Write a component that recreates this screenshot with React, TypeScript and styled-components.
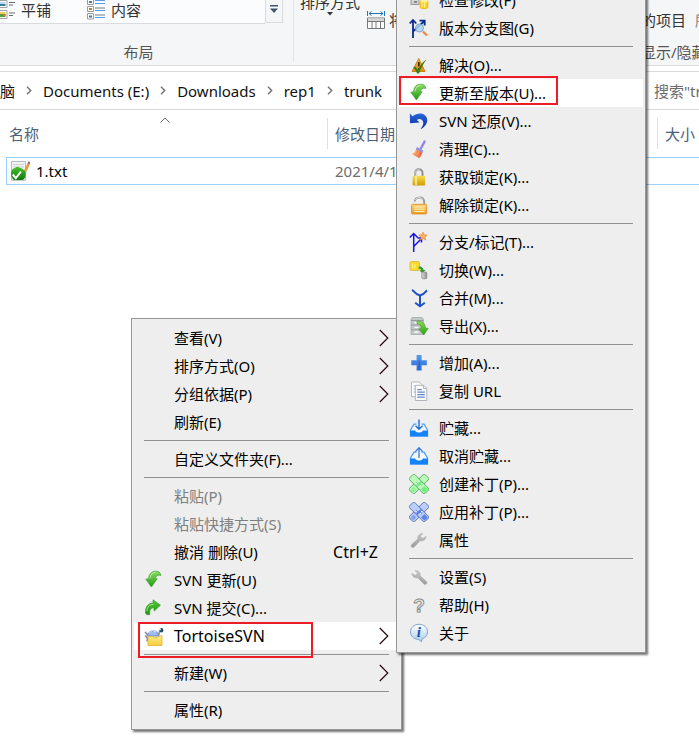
import React from "react";
import styled, { createGlobalStyle } from "styled-components";

const GlobalStyle = createGlobalStyle`
  * { box-sizing: border-box; }
  html, body { margin: 0; background: #fff; }
  body, button, input, table {
    font-family: "Noto Sans", "Noto Sans CJK SC", sans-serif;
    font-size: 15px;
    line-height: 20px;
    color: #000;
  }
  button { border: 0; background: none; padding: 0; text-align: left; white-space: nowrap; }
`;

/* ---------- Window ---------- */

const Window = styled.div`
  position: relative;
  min-height: 100vh;
  overflow: hidden;
  background: #fff;
`;

const Ribbon = styled.header`
  display: flex;
  height: 66px;
  background: #f5f6f7;
  border-bottom: 1px solid #dadbdc;
  overflow: hidden;
  color: #333;
`;

const LayoutGroup = styled.section`
  display: flex;
  flex-direction: column;
  width: 294px;
  padding-right: 11px;
  flex: none;
`;

const GroupDivider = styled.div`
  flex: none;
  width: 1px;
  height: 62px;
  margin-left: -1px;
  background: #e2e3e4;
`;

const Gallery = styled.div`
  display: flex;
  height: 24px;
`;

const GalleryItems = styled.div`
  display: flex;
  flex: 1;
  background: #fbfcfd;
  border-bottom: 1px solid #dadbdc;
`;

const GalleryItem = styled.button<{ $width: number; $gap: number }>`
  display: flex;
  align-items: center;
  gap: ${(p) => p.$gap}px;
  width: ${(p) => p.$width}px;
  height: 20px;
  color: #333;
`;

const GalleryMore = styled.button`
  width: 18px;
  height: 23px;
  display: flex;
  justify-content: center;
  border: 1px solid #dadbdc;
  border-top: 0;
`;

const GroupLabel = styled.div`
  color: #555;
  text-align: center;
  margin-top: 18px;
  padding-right: 6px;
  white-space: nowrap;
`;

const ViewGroup = styled.section`
  flex: 1;
  display: flex;
  padding-left: 6px;
  gap: 7px;
  min-width: 0;
  overflow: hidden;
`;

const SortButton = styled.button`
  display: flex;
  flex-direction: column;
  align-items: center;
  margin-top: -8px;
  height: 30px;
  color: #333;
  flex: none;
`;

const FitButton = styled.button`
  display: flex;
  align-items: center;
  gap: 4px;
  height: 22px;
  margin-top: 9px;
  color: #333;
`;

const ShowGroup = styled.section`
  flex: none;
  width: 58px;
  padding-top: 10px;
  overflow: hidden;
`;

const ShowRow = styled.div`
  display: flex;
  gap: 9px;
  height: 20px;
  white-space: nowrap;
`;

const ShowButton = styled.button<{ $disabled?: boolean }>`
  flex: none;
  color: ${(p) => (p.$disabled ? "#888" : "#333")};
`;

const ShowLabel = styled.div`
  margin-top: 12px;
  color: #555;
  white-space: nowrap;
`;

const AddressBar = styled.nav`
  display: flex;
  height: 39px;
  margin-top: 5px;
  border: 1px solid #d9d9d9;
  border-width: 1px 0;
`;

const Crumbs = styled.div`
  flex: 1;
  display: flex;
  align-items: center;
  min-width: 0;
  overflow: hidden;
`;

const Crumb = styled.button`
  color: #111;
  flex: none;
`;

const CrumbArrow = styled.span`
  display: flex;
  justify-content: center;
  flex: none;
  width: 28px;
`;

const Search = styled.input`
  width: 45px;
  border: 0;
  padding: 0;
  outline: 0;
  background: transparent;
  &::placeholder { color: #6d6d6d; opacity: 1; }
`;

const FileTable = styled.table`
  width: calc(100% - 6px);
  margin-left: 6px;
  table-layout: fixed;
  border-collapse: separate;
  border-spacing: 0;
`;

const Th = styled.th<{ $width?: number }>`
  width: ${(p) => (p.$width ? `${p.$width}px` : "auto")};
  height: 47px;
  padding: 0;
  font-weight: 400;
  text-align: left;
  color: #4c607a;
  position: relative;
`;

const ThLabel = styled.div<{ $first?: boolean }>`
  height: 31px;
  padding: 6px 0 0 ${(p) => (p.$first ? 3 : 7)}px;
  border-left: ${(p) => (p.$first ? "0" : "1px solid #e0e0e0")};
  white-space: nowrap;
  overflow: hidden;
`;

const SortMark = styled.svg`
  position: absolute;
  top: 7px;
  left: 50%;
  margin-left: -7px;
`;

const Td = styled.td<{ $muted?: boolean }>`
  height: 28px;
  padding: 0 0 0 ${(p) => (p.$muted ? 8 : 3)}px;
  border: 1px solid #99d1ff;
  border-width: 1px 0;
  color: ${(p) => (p.$muted ? "#6d6d6d" : "#000")};
  white-space: nowrap;
  overflow: hidden;
  &:first-child { border-left-width: 1px; }
`;

const FileName = styled.div`
  display: flex;
  align-items: center;
  gap: 6px;
`;

/* ---------- Menus ---------- */

const Menu = styled.div<{ $left: number; $top: number; $width: number }>`
  position: absolute;
  left: ${(p) => p.$left}px;
  top: ${(p) => p.$top}px;
  width: ${(p) => p.$width}px;
  padding: 5px 2px;
  background: #eee;
  border: 1px solid #979797;
  box-shadow: 2px 2px 2px rgba(0, 0, 0, 0.55);
`;

const Item = styled.button<{ $active?: boolean; $disabled?: boolean }>`
  position: relative;
  display: flex;
  align-items: center;
  width: 100%;
  height: 28px;
  padding: 0 10px;
  color: ${(p) => (p.$disabled ? "#808080" : "#000")};
  background: ${(p) => (p.$active ? "#fff" : "transparent")};
`;

const IconSlot = styled.span`
  flex: none;
  width: 30px;
  height: 20px;
`;

const Label = styled.span<{ $latin?: boolean }>`
  flex: 1;
  font-size: ${(p) => (p.$latin ? 16 : 15)}px;
`;

const Shortcut = styled.span`
  padding-right: 11px;
  font-size: 16px;
`;

const Separator = styled.hr`
  height: 1px;
  margin: 4px 10px;
  border: 0;
  background: #919191;
`;

const Marker = styled.span<{ $x: number; $y: number; $w: number; $h: number }>`
  position: absolute;
  z-index: 1;
  left: ${(p) => p.$x}px;
  top: ${(p) => p.$y}px;
  width: ${(p) => p.$w}px;
  height: ${(p) => p.$h}px;
  border: 2px solid #ed1c24;
  pointer-events: none;
`;

/* ---------- Icons ---------- */

const Svg = ({ children }: { children: React.ReactNode }) => (
  <svg width="20" height="20" viewBox="0 0 20 20" fill="none" aria-hidden="true" display="block">
    {children}
  </svg>
);

const Grad = ({ id, from, to, across }: { id: string; from: string; to: string; across?: boolean }) => (
  <linearGradient id={id} x1="0" y1="0" x2={across ? "1" : "0"} y2={across ? "0" : "1"}>
    <stop offset="0" stopColor={from} />
    <stop offset="1" stopColor={to} />
  </linearGradient>
);

const Update = ({ id }: { id: string }) => (
  <Svg>
    <Grad id={id} from="#8fdc6a" to="#1e9a10" />
    <path d="M4.600 8.800C4.800 4 7.600 1.200 11.600 1.200c3 0 5 1.400 5.200 4.400-1.800-1-4.600-.6-5.400 3l1.800.2-5.800 8.200L1.800 9.200z" fill={`url(#${id})`} stroke="#3da32c" strokeWidth=".7" />
    <path d="M6 8.500C6.300 5 8.300 2.500 11.600 2.300" stroke="#c2f2a8" strokeWidth=".9" />
  </Svg>
);

const Commit = () => (
  <Svg>
    <Grad id="gCommit" from="#55c93c" to="#1e9a10" />
    <path d="M1.600 15.500C1 9.200 4 5.200 9.200 5.100L9 1.800l7.400 5.400-6.200 5.800-.2-3.200c-3.200-.2-4.600 2-4.200 6.600-1.500.6-3 .4-4.200-.9z" fill="url(#gCommit)" stroke="#3a8f2c" strokeWidth=".7" />
    <path d="M3 13C3 9 5.500 6.500 9.500 6.400" stroke="#a8ec8c" strokeWidth=".9" />
  </Svg>
);

const Tortoise = () => (
  <Svg>
    <Grad id="gFolder" from="#ffe98a" to="#f5d040" />
    <path d="M1 6l3 3M1.500 9.500l2 3-.5 3" stroke="#7d8791" strokeWidth="1.500" />
    <path d="M3.500 10a5.700 6.300 0 0 1 11.200 0z" fill="#9dbcf0" stroke="#6a88c8" />
    <path d="M5.500 6.500l3-2 3.500 1.500" stroke="#d5e3fb" />
    <path d="M14.500 9.500l1.300-5" stroke="#8796a3" strokeWidth="1.800" />
    <ellipse cx="17.400" cy="4.300" rx="1.900" ry="2.300" fill="#24465c" />
    <circle cx="16" cy="3.400" r="1" fill="#d4eafa" />
    <path d="M4 10.500h4.500l1.500 1.500L18 9.500v10H4z" fill="url(#gFolder)" stroke="#e0b030" strokeWidth=".8" />
  </Svg>
);

const CheckMods = () => (
  <Svg>
    <rect x="2" y="9" width="8" height="5.500" fill="#d4d4d4" stroke="#9a9a9a" />
    <rect x="5" y="11" width="3" height="2" fill="#888" />
    <path d="M11.200 11v6.200c0 2 7.600 2 7.600 0V11z" fill="#ffd21a" stroke="#e3ae10" strokeWidth=".8" />
    <ellipse cx="15" cy="11.200" rx="3.800" ry="1.400" fill="#fff09a" />
    <path d="M13 13v4M15.500 13v4.500" stroke="#fff09a" />
  </Svg>
);

const Graph = () => (
  <Svg>
    <path d="M4 20V2M.7 5.500L4 2l3.300 3.500M4.500 13L15 3.500M10.500 2.600h5.200v5" stroke="#0c2a8c" strokeWidth="1.800" />
    <circle cx="10.500" cy="10" r="4" fill="#a9d3ef" fillOpacity=".85" stroke="#7fa8c8" />
    <path d="M14 13.500l4 4" stroke="#f08a48" strokeWidth="2.400" />
  </Svg>
);

const Resolve = () => (
  <Svg>
    <Grad id="gRes" from="#fbc04a" to="#e88b10" />
    <path d="M9.800 3.500L16 16.500H3z" fill="url(#gRes)" stroke="#c8801c" strokeLinejoin="round" />
    <path d="M9.800 7v4.500M9.800 13v1.500" stroke="#40300c" strokeWidth="1.800" />
    <path d="M4.500 12.500l1.800-1 2.600 3.200C11 10.500 13.500 7 17.500 4.500c-3 4-5.500 8.500-7.500 14H8.300z" fill="#3e7d16" />
  </Svg>
);

const Revert = () => (
  <Svg>
    <Grad id="gRev" from="#2868dc" to="#072a9c" />
    <path d="M.8 2.500l2.800 2.700C8 1.800 13 1.500 16.200 4.400c4 4 2 10.600-4.800 13.800 3-3.600 3.800-7 1.800-9-1.500-1.600-3.600-1.500-5.400-.3l2.800 2.700L1 12.200z" fill="url(#gRev)" />
  </Svg>
);

const Broom = () => (
  <Svg>
    <Grad id="gBroom" from="#f8b070" to="#ef5a3c" across />
    <path d="M15.600 2.500l-3.800 7" stroke="#8f86e8" strokeWidth="2.400" strokeLinecap="round" />
    <path d="M8 8l6.200 3.500-.8 2.600-6.600-3.800z" fill="#8a93e6" />
    <path d="M7.200 10.200l6.200 3.500c-.8 2-1.600 4-3.200 5.500L3 15c2-1 3.300-2.500 4.200-4.800z" fill="url(#gBroom)" />
    <path d="M7.500 11.500l-2 3M9.500 12.500l-1 3" stroke="#ffd090" strokeWidth=".7" />
  </Svg>
);

const Lock = () => (
  <Svg>
    <Grad id="gLock" from="#f6de50" to="#d19a08" />
    <path d="M6.200 10V6c0-5 7.300-5 7.300 0v4" stroke="#8f8f8f" strokeWidth="2" />
    <path d="M6 9V6c.2-3.400 3.300-4.200 5-3" stroke="#dcdcdc" strokeWidth=".8" />
    <rect x="3.600" y="8.800" width="12.600" height="9.800" rx="1" fill="url(#gLock)" />
    <path d="M7 9v9" stroke="#fbee98" strokeWidth="1.600" />
  </Svg>
);

const Unlock = () => (
  <Svg>
    <Grad id="gUnlock" from="#ffd878" to="#ee9a24" />
    <path d="M5.600 6.500c.6-5 8.800-5.600 9.600 0V10" stroke="#969696" strokeWidth="1.800" />
    <path d="M6 5c2-3 6-3.300 8-.5" stroke="#e6e6e6" strokeWidth=".8" />
    <rect x="2.500" y="9.300" width="15.200" height="9.700" rx="1" fill="url(#gUnlock)" stroke="#d98a1c" strokeWidth=".8" />
    <path d="M5 12h10.500M5 14.200h10.500M5 16.500h10.500" stroke="#fff0c0" />
  </Svg>
);

const Branch = () => (
  <Svg>
    <path d="M4.700 20V2M.8 5.500l3.900-4 3.900 4M4.700 14.500L12 7M8.500 6h4v4.500" stroke="#1414ec" strokeWidth="1.500" />
    <path d="M14 .2l1.200 2.700 3 .2-2.300 2 .8 3-2.700-1.700-2.600 1.700.7-3L9.800 3.100l3-.2z" fill="#ffb45c" stroke="#e8843c" strokeWidth=".7" />
  </Svg>
);

const Switch = () => (
  <Svg>
    <Grad id="gSwGray" from="#dedede" to="#8d8d8d" across />
    <rect x="1" y="1.500" width="9.400" height="9" rx="1.500" fill="#ffdc24" stroke="#d9b844" strokeWidth=".9" />
    <path d="M3.500 3.500v4.500M5.800 4.500v5" stroke="#fff6a0" strokeWidth=".8" />
    <path d="M9.500 6.500c3-.3 4.800 1 5 3.600l1.800-.1-2.800 3.500-3.200-3.200 1.800-.1c-.3-1.200-1.200-1.700-2.600-1.700z" fill="#2f9a2c" />
    <rect x="12.800" y="12" width="5" height="6.800" rx="1.400" fill="url(#gSwGray)" stroke="#8c8c8c" strokeWidth=".8" />
  </Svg>
);

const Merge = () => (
  <Svg>
    <path d="M3 1.800c2 1 2.500 4.500 8 5.700 5-1.200 5.500-4.200 7-5.200M11 7.500V18M6.200 14.700L11 18.300l4.800-3.600" stroke="#1f52c4" strokeWidth="2" />
  </Svg>
);

const Export = () => (
  <Svg>
    <Grad id="gExp" from="#8ade50" to="#2a9c14" />
    <path d="M3 1.500h10l1.500 2v15H2V3.500z" fill="#c3c8c8" stroke="#a2a8a8" strokeWidth=".8" />
    <path d="M2 4.500h12M2 9h12M2 13.800h12" stroke="#959c9c" />
    <path d="M5.500 6.800h4M5.500 11.400h4M5.500 16h4" stroke="#fff" strokeWidth="1.400" />
    <path d="M8 5.200c5-.4 8.200 1.800 8.500 7l2.700.1-4.300 6.600-5.200-6 2.500-.2C12 9 10.800 8 8 7.800z" fill="url(#gExp)" stroke="#3a9c24" strokeWidth=".6" />
  </Svg>
);

const Plus = () => (
  <Svg>
    <Grad id="gPlus" from="#5a9cf0" to="#2a68d4" />
    <path d="M7.600 2h5v5.300h5.200v5h-5.200v5.300h-5v-5.300H2.300v-5h5.300z" fill="url(#gPlus)" />
    <path d="M10.200 7.500v7" stroke="#2454bc" strokeWidth=".9" />
  </Svg>
);

const Copy = () => (
  <Svg>
    <path d="M2.500 1h7.700l3 3v11.700H2.500z" fill="#fff" stroke="#b4b8bc" />
    <path d="M4.500 5h4M4.500 8h3M4.500 11h3" stroke="#9db4d8" />
    <path d="M6.300 4.300h8.200l3.300 3.200v12H6.300z" fill="#fbfcfe" stroke="#b0b4b8" />
    <path d="M14.500 4.300v3.200h3.300" stroke="#b0b4b8" />
    <path d="M8.300 8.700h4.500M8.300 11.200h7.500M8.300 13.700h7.500M8.300 16.200h7.500" stroke="#6287c4" strokeWidth="1.200" />
  </Svg>
);

const Tray = ({ up }: { up?: boolean }) => (
  <Svg>
    <path d="M7.500 6.200H5L1.500 12v6h17v-6L15 6.200h-2.500" fill="#f4f9ff" stroke="#4a9cf4" strokeWidth="1.200" />
    <path d="M1 12.500h5.200c.6 2.800 7 2.800 7.600 0H19v6H1z" fill="#1482f8" />
    {up ? (
      <path d="M10 12V2M6.300 5.600L10 1.800l3.700 3.800" stroke="#3c7cd8" strokeWidth="1.300" />
    ) : (
      <path d="M10 1.500v9.500M6.500 7.800L10 11.300l3.500-3.500" stroke="#1c6ad8" strokeWidth="1.400" />
    )}
  </Svg>
);

const Patch = ({ light, dark, edge }: { light: string; dark: string; edge: string }) => (
  <Svg>
    <rect x="-1" y="6.300" width="22" height="7.400" rx="1.200" transform="rotate(-45 10 10)" fill={light} stroke={edge} strokeWidth=".8" />
    <rect x="-1" y="6.300" width="22" height="7.400" rx="1.200" transform="rotate(45 10 10)" fill={light} stroke={edge} strokeWidth=".8" />
    <path d="M12 15.500l3.500-3.500 3.200 3.600-3.200 3.200z" fill={dark} />
    <path d="M4.500 12.500l3 3-3 3-3-3z" fill={dark} fillOpacity=".6" />
    <path d="M5.500 10L10 5.500l4.500 4.500-4.500 4.500z" fill={dark} />
    <path d="M10 6.200v1.500M10 12.300v1.500M6.300 9.800h1.500M12.200 9.800h1.500M8.200 8h1.400M10.600 11.800h1.400" stroke="#fff" strokeWidth="1.400" />
  </Svg>
);

const Wrench = ({ flip }: { flip?: boolean }) => (
  <Svg>
    <Grad id={flip ? "gWr2" : "gWr1"} from="#c9c9c9" to="#9a9a9a" />
    <path
      transform={flip ? "translate(20 0) scale(-1 1)" : undefined}
      d="M17.200 6.500c-.3 3.200-3.200 5-6 4.200l-6 6.300c-1.800 1.500-4.200-.6-2.600-2.500l6.300-5.700C8.200 6 10.500 3.300 13.800 3.500l-2.400 2.700 2.200 2.200z"
      fill={`url(#${flip ? "gWr2" : "gWr1"})`}
      stroke="#adadad"
      strokeWidth=".6"
    />
  </Svg>
);

const Help = () => (
  <Svg>
    <text x="10" y="16.500" textAnchor="middle" fontFamily="Liberation Sans" fontWeight="700" fontSize="19" fill="#efefef" stroke="#8c8c8c" strokeWidth="1">?</text>
  </Svg>
);

const About = () => (
  <Svg>
    <Grad id="gInfo" from="#ffffff" to="#a9cdf0" />
    <path d="M10 1.300c5 0 8.500 3.200 8.500 7.500 0 3.600-2.300 6-5.500 7l-.5 3-3-2.400C4.800 16.200 1.500 13 1.500 8.800c0-4.300 3.500-7.500 8.500-7.500z" fill="url(#gInfo)" stroke="#7da6cc" />
    <text x="9.800" y="14" textAnchor="middle" fontFamily="Liberation Serif" fontStyle="italic" fontWeight="700" fontSize="15" fill="#1450b4">i</text>
  </Svg>
);

const Chevron = () => (
  <svg width="10" height="18" viewBox="0 0 10 18" fill="none" aria-hidden="true">
    <path d="M.8 1l8 8-8 8" stroke="#26080c" strokeWidth="1.200" />
  </svg>
);

const CrumbChevron = () => (
  <svg width="6" height="9" viewBox="0 0 6 9" fill="none" aria-hidden="true">
    <path d="M1 .8l3.700 3.700L1 8.200" stroke="#777" strokeWidth="1.500" />
  </svg>
);

const TilesIcon = () => (
  <svg width="16" height="20" viewBox="0 0 16 20" fill="none" aria-hidden="true">
    <path d="M-3 .5H7v7H-3zM-3 10.500H7v8H-3z" fill="#fff" stroke="#a4a4a4" />
    <path d="M0 2h5.500v2H0z" fill="#b8dcf8" />
    <path d="M0 4h5.500v2H0z" fill="#3a7a9c" />
    <path d="M0 12h5.500v2H0z" fill="#f0c860" />
    <path d="M0 14h5.500v3H0z" fill="#58a03c" />
    <path d="M3 14h2.500v2H3z" fill="#e07040" />
    <path d="M9 2.500h6M9 5h4M9 13h6M9 15.500h4" stroke="#6c6c6c" />
  </svg>
);

const ContentIcon = () => (
  <svg width="18" height="20" viewBox="0 0 18 20" fill="none" aria-hidden="true">
    <path d="M.5-.5h6v5h-6zM.5 6.500h6v5h-6zM.5 13.500h6v5.500h-6z" fill="#fff" stroke="#9c9c9c" />
    <path d="M2 1h3v2H2zM2 15.500h3v2H2z" fill="#3c78b4" />
    <path d="M2 8h3v2H2z" fill="#a48c3c" />
    <path d="M8 .5h10M8 3.500h10M8 10.500h10M8 17.500h10" stroke="#5a9cf0" />
    <path d="M8 8h10M8 15h10" stroke="#6c7c8c" />
  </svg>
);

const MoreIcon = () => (
  <svg width="10" height="20" viewBox="0 0 10 20" aria-hidden="true">
    <path d="M1 5h8v1.500H1zM1 8.500h8L5 13z" fill="#3f5574" />
  </svg>
);

const DownIcon = () => (
  <svg width="6" height="4" viewBox="0 0 6 4" aria-hidden="true">
    <path d="M0 0h6L3 3.500z" fill="#333" />
  </svg>
);

const FitIcon = () => (
  <svg width="18" height="18" viewBox="0 0 18 18" fill="none" aria-hidden="true">
    <path d="M.5 0v5M17.500 0v5M2 2.500h14M4.500.5l-2.500 2 2.500 2M13.500.5l2.500 2-2.500 2" stroke="#1f74b8" />
    <path d="M.5 7h17v10.500H.5z" fill="#fff" stroke="#777" />
    <path d="M1 7.500h16v3H1z" fill="#d6d6d6" />
    <path d="M.5 10.500h17M5 10.500v7M9 10.500v7M13.500 10.500v7" stroke="#777" />
  </svg>
);

const FileIcon = () => (
  <svg width="20" height="20" viewBox="0 0 20 20" fill="none" aria-hidden="true">
    <Grad id="gFile" from="#46c42c" to="#0f7a0c" />
    <path d="M1.500.5h14v18.800h-14z" fill="#f0f2f4" stroke="#b8bcc0" />
    <path d="M3 3.500h11M3 6h11" stroke="#d0d4d8" />
    <path d="M13 13l4.700-10.500 1.700.8L14.500 14l-2 1.500z" fill="#f0a030" stroke="#c87818" strokeWidth=".5" />
    <path d="M17.700 2.300l.8-1.800 1.700.8-.8 1.900z" fill="#8c4868" />
    <path d="M1 12c0-3 2-4.500 4-5C6.500 5.200 8.500 5.400 9.500 6.800c3.500.8 6.200 3 6.200 6.200 0 3.500-1.700 6-3.700 6H4c-2-1.500-3-4-3-7z" fill="url(#gFile)" />
    <path d="M2.800 13.500l3 3.700L11 10.500" stroke="#fff" strokeWidth="2" />
  </svg>
);

/* ---------- Menu data ---------- */

type Entry =
  | null
  | {
      label: string;
      latin?: boolean;
      icon?: React.ReactNode;
      shortcut?: string;
      more?: boolean;
      disabled?: boolean;
      active?: boolean;
      marker?: [number, number, number, number];
    };

const mainEntries: Entry[] = [
  { label: "查看(V)", more: true },
  { label: "排序方式(O)", more: true },
  { label: "分组依据(P)", more: true },
  { label: "刷新(E)" },
  null,
  { label: "自定义文件夹(F)..." },
  null,
  { label: "粘贴(P)", disabled: true },
  { label: "粘贴快捷方式(S)", disabled: true },
  { label: "撤消 删除(U)", shortcut: "Ctrl+Z" },
  { label: "SVN 更新(U)", icon: <Update id="gUpd1" /> },
  { label: "SVN 提交(C)...", icon: <Commit /> },
  { label: "TortoiseSVN", latin: true, icon: <Tortoise />, more: true, active: true, marker: [4, 0, 175, 36] },
  null,
  { label: "新建(W)", more: true },
  null,
  { label: "属性(R)" },
];

const svnEntries: Entry[] = [
  { label: "检查修改(F)", icon: <CheckMods /> },
  { label: "版本分支图(G)", icon: <Graph /> },
  null,
  { label: "解决(O)...", icon: <Resolve /> },
  { label: "更新至版本(U)...", icon: <Update id="gUpd2" />, active: true, marker: [0, -3, 159, 29] },
  { label: "SVN 还原(V)...", icon: <Revert /> },
  { label: "清理(C)...", icon: <Broom /> },
  { label: "获取锁定(K)...", icon: <Lock /> },
  { label: "解除锁定(K)...", icon: <Unlock /> },
  null,
  { label: "分支/标记(T)...", icon: <Branch /> },
  { label: "切换(W)...", icon: <Switch /> },
  { label: "合并(M)...", icon: <Merge /> },
  { label: "导出(X)...", icon: <Export /> },
  null,
  { label: "增加(A)...", icon: <Plus /> },
  { label: "复制 URL", icon: <Copy /> },
  null,
  { label: "贮藏...", icon: <Tray /> },
  { label: "取消贮藏...", icon: <Tray up /> },
  { label: "创建补丁(P)...", icon: <Patch light="#b8fcb8" dark="#6cf07c" edge="#4c9c54" /> },
  { label: "应用补丁(P)...", icon: <Patch light="#bccffc" dark="#5c84f0" edge="#4c60a0" /> },
  { label: "属性", icon: <Wrench /> },
  null,
  { label: "设置(S)", icon: <Wrench flip /> },
  { label: "帮助(H)", icon: <Help /> },
  { label: "关于", icon: <About /> },
];

const MenuEntries = ({ entries }: { entries: Entry[] }) => (
  <>
    {entries.map((e, i) =>
      e === null ? (
        <Separator key={i} />
      ) : (
        <Item key={i} role="menuitem" $active={e.active} $disabled={e.disabled} disabled={e.disabled}>
          <IconSlot>{e.icon}</IconSlot>
          <Label $latin={e.latin}>{e.label}</Label>
          {e.shortcut && <Shortcut>{e.shortcut}</Shortcut>}
          {e.more && <Chevron />}
          {e.marker && <Marker $x={e.marker[0]} $y={e.marker[1]} $w={e.marker[2]} $h={e.marker[3]} />}
        </Item>
      )
    )}
  </>
);

const crumbs = ["脑", "Documents (E:)", "Downloads", "rep1", "trunk"];

export default function App() {
  return (
    <Window>
      <GlobalStyle />
      <Ribbon>
        <LayoutGroup>
          <Gallery>
            <GalleryItems>
              <GalleryItem $width={87} $gap={5}><TilesIcon />平铺</GalleryItem>
              <GalleryItem $width={90} $gap={6}><ContentIcon />内容</GalleryItem>
            </GalleryItems>
            <GalleryMore aria-label="更多"><MoreIcon /></GalleryMore>
          </Gallery>
          <GroupLabel>布局</GroupLabel>
        </LayoutGroup>
        <GroupDivider />
        <ViewGroup>
          <SortButton>排序方式<DownIcon /></SortButton>
          <FitButton><FitIcon />将</FitButton>
        </ViewGroup>
        <ShowGroup>
          <ShowRow>
            <ShowButton>的项目</ShowButton>
            <ShowButton $disabled>所</ShowButton>
          </ShowRow>
          <ShowLabel>显示/隐藏</ShowLabel>
        </ShowGroup>
      </Ribbon>

      <AddressBar>
        <Crumbs>
          {crumbs.map((c, i) => (
            <React.Fragment key={c}>
              {i > 0 && <CrumbArrow><CrumbChevron /></CrumbArrow>}
              <Crumb>{c}</Crumb>
            </React.Fragment>
          ))}
        </Crumbs>
        <Search type="text" aria-label="搜索" placeholder={'搜索"trunk"'} />
      </AddressBar>

      <FileTable>
        <thead>
          <tr>
            <Th $width={321}>
              <ThLabel $first>名称</ThLabel>
              <SortMark width="10" height="6" viewBox="0 0 10 6" fill="none" aria-hidden="true">
                <path d="M.5 5.500L5 1l4.500 4.500" stroke="#666" />
              </SortMark>
            </Th>
            <Th><ThLabel>修改日期</ThLabel></Th>
            <Th $width={42}><ThLabel>大小</ThLabel></Th>
          </tr>
        </thead>
        <tbody>
          <tr>
            <Td><FileName><FileIcon />1.txt</FileName></Td>
            <Td $muted>2021/4/1</Td>
            <Td $muted />
          </tr>
        </tbody>
      </FileTable>

      <Menu role="menu" aria-label="文件夹" $left={131} $top={318} $width={271}>
        <MenuEntries entries={mainEntries} />
      </Menu>
      <Menu role="menu" aria-label="TortoiseSVN" $left={396} $top={-20} $width={250}>
        <MenuEntries entries={svnEntries} />
      </Menu>
    </Window>
  );
}
